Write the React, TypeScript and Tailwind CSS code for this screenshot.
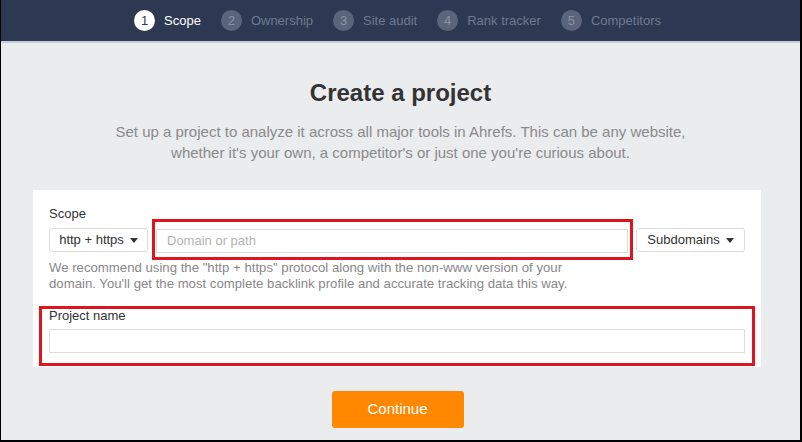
import React from 'react';

const steps = ['Scope', 'Ownership', 'Site audit', 'Rank tracker', 'Competitors'];

const Caret = () => (
  <svg width="8" height="5" viewBox="0 0 8 5" className="ml-[6px]">
    <path d="M0 0h8L4 5z" fill="#333" />
  </svg>
);

const App: React.FC = () => {
  return (
    <div className="w-[802px] h-[442px] overflow-hidden bg-[#ebecee] border-l border-r-2 border-b-2 border-black font-['Liberation_Sans',Arial,sans-serif]">
      {/* Wizard steps */}
      <header className="h-[43px] bg-[#2d3952] border-b-2 border-[#c4ccd8] flex items-center justify-center pr-[6px]">
        <div className="flex items-center gap-[20px]">
          {steps.map((s, i) => (
            <div key={s} className="flex items-center gap-[9px]">
              <span
                className={`w-[21px] h-[21px] rounded-full flex items-center justify-center text-[13px] ${
                  i === 0 ? 'bg-white text-[#2d3952]' : 'bg-[#5a657b] text-[#8a93a6]'
                }`}
              >
                {i + 1}
              </span>
              <span className={`text-[13px] ${i === 0 ? 'text-white' : 'text-[#6f7a90]'}`}>{s}</span>
            </div>
          ))}
        </div>
      </header>

      <main className="flex flex-col items-center">
        <h1 className="mt-[36px] text-[24px] leading-[28px] font-bold text-[#333]">Create a project</h1>
        <p className="mt-[14px] text-center text-[15px] leading-[21px] text-[#8a8a8a]">
          Set up a project to analyze it across all major tools in Ahrefs. This can be any website,
          <br />
          whether it's your own, a competitor's or just one you're curious about.
        </p>

        {/* Form card */}
        <section className="mt-[27px] w-[728px] bg-white px-[16px] pt-[16px] pb-[14px] self-start ml-[32px]">
          <label className="block text-[13px] leading-[16px] text-[#333]">Scope</label>
          <div className="mt-[6px] flex gap-[8px] h-[24px]">
            <button className="w-[99px] h-full flex items-center justify-center border border-[#dcdcdc] rounded-[3px] text-[13px] text-[#333] bg-white">
              http + https
              <Caret />
            </button>
            <div className="relative flex-1">
              <input
                className="w-full h-full border border-[#dcdcdc] px-[10px] text-[13px] text-[#333] placeholder:text-[#b3b3b3] outline-none"
                placeholder="Domain or path"
              />
              <div className="absolute -left-[4px] -right-[5px] -top-[9px] -bottom-[8px] border-[3px] border-[#e0141e] pointer-events-none" />
            </div>
            <button className="w-[109px] h-full flex items-center justify-center border border-[#dcdcdc] rounded-[3px] text-[13px] text-[#333] bg-white">
              Subdomains
              <Caret />
            </button>
          </div>
          <p className="mt-[8px] text-[13.2px] leading-[16px] text-[#888]">
            We recommend using the "http + https" protocol along with the non-www version of your
            <br />
            domain. You'll get the most complete backlink profile and accurate tracking data this way.
          </p>

          <div className="relative mt-[16px]">
            <label className="block text-[13px] leading-[16px] text-[#333]">Project name</label>
            <input className="mt-[5px] w-full h-[24px] border border-[#dcdcdc] px-[10px] text-[13px] outline-none" />
            <div className="absolute -left-[10px] -right-[10px] -top-[2px] -bottom-[13px] border-[3px] border-[#e0141e] pointer-events-none" />
          </div>
        </section>

        <button className="mt-[24px] w-[132px] h-[37px] rounded-[3px] bg-[#ff8800] text-white text-[15px] -translate-x-[3px]">
          Continue
        </button>
      </main>
    </div>
  );
};

export default App;
